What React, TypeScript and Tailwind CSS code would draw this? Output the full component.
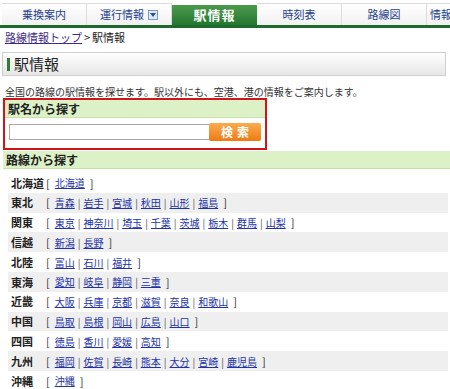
const TABS = [
  { label: "乗換案内" },
  { label: "運行情報", menu: true },
  { label: "駅情報", active: true },
  { label: "時刻表" },
  { label: "路線図" },
  { label: "情報" },
];

const AREAS: { name: string; prefs: string[] }[] = [
  { name: "北海道", prefs: ["北海道"] },
  { name: "東北", prefs: ["青森", "岩手", "宮城", "秋田", "山形", "福島"] },
  { name: "関東", prefs: ["東京", "神奈川", "埼玉", "千葉", "茨城", "栃木", "群馬", "山梨"] },
  { name: "信越", prefs: ["新潟", "長野"] },
  { name: "北陸", prefs: ["富山", "石川", "福井"] },
  { name: "東海", prefs: ["愛知", "岐阜", "静岡", "三重"] },
  { name: "近畿", prefs: ["大阪", "兵庫", "京都", "滋賀", "奈良", "和歌山"] },
  { name: "中国", prefs: ["鳥取", "島根", "岡山", "広島", "山口"] },
  { name: "四国", prefs: ["徳島", "香川", "愛媛", "高知"] },
  { name: "九州", prefs: ["福岡", "佐賀", "長崎", "熊本", "大分", "宮崎", "鹿児島"] },
  { name: "沖縄", prefs: ["沖縄"] },
];

const font = "font-['MS_PGothic','Noto_Sans_CJK_JP',sans-serif]";

export default function App() {
  return (
    <div className={`w-[450px] h-[389px] overflow-hidden bg-white text-[12px] text-[#222] ${font}`}>
      {/* タブ */}
      <div className="h-[28px] pt-[3px] pl-[2px] border-b-[3px] border-[#1d6a2c] flex whitespace-nowrap overflow-hidden">
        {TABS.map((t) =>
          t.active ? (
            <div
              key={t.label}
              className="w-[85px] mt-[2px] shrink-0 flex items-center justify-center bg-gradient-to-b from-[#4c9a4e] to-[#22772f] text-white font-bold text-[13px] tracking-[1px]"
            >
              {t.label}
            </div>
          ) : (
            <div
              key={t.label}
              className="w-[85px] shrink-0 flex items-center justify-center gap-1 border-t border-r border-[#dcdcdc] bg-gradient-to-b from-white to-[#f1f1f1] text-[#23408e] text-[11px]"
            >
              <span className={t.label === "情報" ? "mr-auto ml-[3px]" : ""}>{t.label}</span>
              {t.menu && (
                <span className="w-[10px] h-[10px] border border-[#7b9cc8] bg-[#dde8f6] flex items-center justify-center">
                  <span className="w-0 h-0 border-l-[3px] border-r-[3px] border-t-[4px] border-l-transparent border-r-transparent border-t-[#2b4f8e]" />
                </span>
              )}
            </div>
          )
        )}
      </div>

      {/* パンくず */}
      <div className="h-[18px] pl-[5px] flex items-center text-[11px]">
        <a className="text-[#3d2a8a] underline">路線情報トップ</a>
        <span className="mx-[2px]">&gt;</span>
        <span>駅情報</span>
      </div>

      {/* 見出し */}
      <div className="mt-[6px] ml-[2px] w-[444px] h-[24px] border border-[#cfcfcf] bg-gradient-to-b from-white to-[#e6e6e6] flex items-center">
        <span className="ml-[4px] w-[3px] h-[13px] bg-[#2f7d35]" />
        <span className="ml-[4px] text-[15px] text-[#222]">駅情報</span>
      </div>

      <p className="mt-[10px] pl-[5px] text-[10px] text-[#333] leading-[12px]">
        全国の路線の駅情報を探せます。駅以外にも、空港、港の情報をご案内します。
      </p>

      {/* 駅名から探す */}
      <div className="ml-[3px] w-[264px] border-[2px] border-[#d0141c] pb-[7px]">
        <div className="h-[18px] bg-[#dcf1c6] border-b border-[#c6e2a6] pl-[3px] flex items-center font-bold text-[12px]">
          駅名から探す
        </div>
        <div className="mt-[5px] ml-[4px] flex items-center">
          <input className="w-[201px] h-[16px] border border-[#a8a8a8] bg-white outline-none" />
          <button className="w-[52px] h-[18px] ml-[-1px] rounded-[2px] bg-gradient-to-b from-[#fbab4c] to-[#ee7a10] text-white font-bold text-[12px] tracking-[4px] pl-[4px] flex items-center justify-center">
            検索
          </button>
        </div>
      </div>

      {/* 路線から探す */}
      <div className="mt-[1px] ml-[3px] w-[447px] h-[18px] bg-[#dcf1c6] border-b border-[#c6e2a6] pl-[3px] flex items-center font-bold text-[12px]">
        路線から探す
      </div>

      <div className="mt-[4px] ml-[8px] w-[440px]">
        {AREAS.map((a, i) => (
          <div
            key={a.name}
            className={`h-[19.8px] flex items-center whitespace-nowrap ${i % 2 === 1 ? "bg-[#efefef]" : ""}`}
          >
            <span className="w-[38px] pl-[3px] font-bold text-[11px] text-[#222]">{a.name}</span>
            <span className="text-[#333] text-[11px] mr-[5px]">[</span>
            {a.prefs.map((p, j) => (
              <span key={p} className="flex items-center">
                {j > 0 && <span className="mx-[3px] text-[10px] text-[#555]">|</span>}
                <a className="text-[#2233aa] underline text-[10px]">{p}</a>
              </span>
            ))}
            <span className="text-[#333] text-[11px] ml-[5px]">]</span>
          </div>
        ))}
      </div>
    </div>
  );
}
